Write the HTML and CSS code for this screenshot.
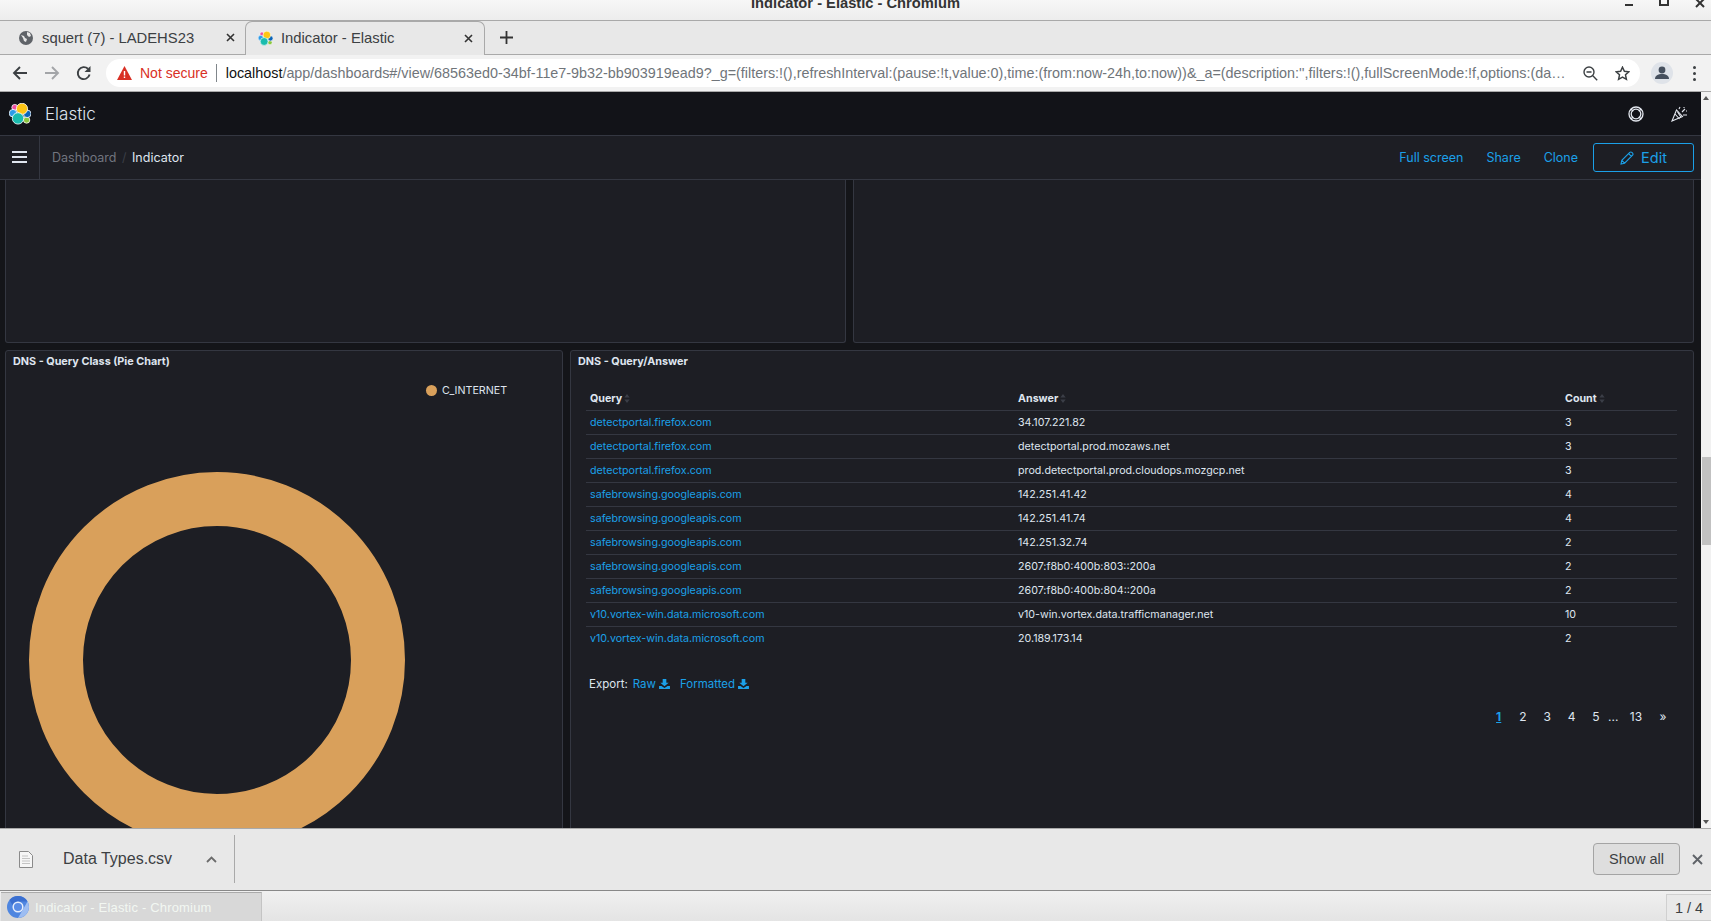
FILE: index.html
```html
<!DOCTYPE html>
<html lang="en">
<head>
  <meta charset="UTF-8">
  <title>Indicator - Elastic - Chromium</title>
  <link rel="stylesheet" href="styles.css">
</head>
<body>
  <svg class="defs" width="0" height="0">
    <symbol id="elastic-logo" viewBox="0 0 22 22">
      <circle cx="5.8" cy="4.4" r="3" fill="#ee4fa0" stroke="#fff" stroke-width=".8"/>
      <circle cx="17.6" cy="17" r="3.2" fill="#8cc63f" stroke="#fff" stroke-width=".8"/>
      <circle cx="4" cy="10.2" r="3.8" fill="#2d9be8" stroke="#fff" stroke-width=".8"/>
      <circle cx="18.2" cy="10.8" r="3.8" fill="#0b64b8" stroke="#fff" stroke-width=".8"/>
      <circle cx="13" cy="5.8" r="5.6" fill="#fec514" stroke="#fff" stroke-width=".8"/>
      <circle cx="9" cy="15.4" r="5.7" fill="#1abcae" stroke="#fff" stroke-width=".8"/>
    </symbol>
    <symbol id="download" viewBox="0 0 12 11">
      <path d="M4 0h4v4h2.6L6 8 1.4 4H4z" fill="currentColor"/>
      <path d="M0 7.6h2.6L6 10l3.4-2.4H12V11H0z" fill="currentColor"/>
    </symbol>
    <symbol id="sort" viewBox="0 0 6 10">
      <path d="M3 0l3 4H0zM3 10L0 6h6z" fill="#3a3d46"/>
    </symbol>
  </svg>

  <div class="titlebar">
    <span class="title-text">Indicator - Elastic - Chromium</span>
    <div class="win-buttons">
      <span class="win-min"></span>
      <span class="win-max"></span>
      <svg class="win-close" width="10" height="10" viewBox="0 0 10 10"><path d="M1 1l8 8M9 1l-8 8" stroke="#333" stroke-width="2"/></svg>
    </div>
  </div>

  <div class="tabstrip">
    <div class="tab">
      <svg class="tab-icon" width="14" height="14" viewBox="0 0 14 14"><circle cx="7" cy="7" r="7" fill="#5f6368"/><path d="M2 4l3 1 1 2 2 1-1 3-2-1-1-3zM8 1l3 1 1 3-2 1-2-2z" fill="#e8e8e8"/></svg>
      <span class="tab-name">squert (7) - LADEHS23</span>
      <svg class="tab-x" width="9" height="9" viewBox="0 0 9 9"><path d="M1 1l7 7M8 1L1 8" stroke="#333" stroke-width="1.6"/></svg>
    </div>
    <div class="tab tab-active">
      <svg class="tab-icon" width="15" height="15"><use href="#elastic-logo"/></svg>
      <span class="tab-name">Indicator - Elastic</span>
      <svg class="tab-x" width="9" height="9" viewBox="0 0 9 9"><path d="M1 1l7 7M8 1L1 8" stroke="#333" stroke-width="1.6"/></svg>
    </div>
    <svg class="new-tab" width="13" height="13" viewBox="0 0 13 13"><path d="M6.5 0v13M0 6.5h13" stroke="#333" stroke-width="1.8"/></svg>
  </div>

  <div class="toolbar">
    <svg class="nav-btn" width="16" height="16" viewBox="0 0 16 16"><path d="M15 8H2M8 2L2 8l6 6" fill="none" stroke="#3c4043" stroke-width="1.9"/></svg>
    <svg class="nav-btn" width="16" height="16" viewBox="0 0 16 16"><path d="M1 8h13M8 2l6 6-6 6" fill="none" stroke="#a3a5a8" stroke-width="1.9"/></svg>
    <svg class="nav-btn" width="16" height="16" viewBox="0 0 16 16"><path d="M13.6 9.6A6 6 0 1 1 12 3.8" fill="none" stroke="#3c4043" stroke-width="1.9"/><path d="M14.5 1v6h-6z" fill="#3c4043"/></svg>
    <div class="omnibox">
      <svg class="warn" width="15" height="14" viewBox="0 0 15 14"><path d="M7.5 0L15 14H0z" fill="#d93025"/><path d="M6.8 5h1.4v4.6H6.8zM6.8 10.6h1.4V12H6.8z" fill="#fff"/></svg>
      <span class="not-secure">Not secure</span>
      <span class="url"><span class="url-host">localhost</span>/app/dashboards#/view/68563ed0-34bf-11e7-9b32-bb903919ead9?_g=(filters:!(),refreshInterval:(pause:!t,value:0),time:(from:now-24h,to:now))&amp;_a=(description:'',filters:!(),fullScreenMode:!f,options:(da…</span>
      <svg class="omni-icon" width="15" height="15" viewBox="0 0 15 15"><circle cx="6" cy="6" r="5" fill="none" stroke="#3c4043" stroke-width="1.4"/><path d="M3.5 6h5M9.8 9.8l4.4 4.4" stroke="#3c4043" stroke-width="1.4"/></svg>
      <svg class="omni-icon star" width="15" height="15" viewBox="0 0 15 15"><path d="M7.5 1.2l1.9 4.1 4.4.5-3.3 3 .9 4.5-3.9-2.3-3.9 2.3.9-4.5-3.3-3 4.4-.5z" fill="none" stroke="#3c4043" stroke-width="1.5"/></svg>
    </div>
    <span class="avatar"><svg width="14" height="14" viewBox="0 0 14 14"><circle cx="7" cy="4" r="3.4" fill="#46505e"/><path d="M0 13c0-3.5 3-5 7-5s7 1.500 7 5z" fill="#46505e"/></svg></span>
    <span class="menu-dots"><i></i><i></i><i></i></span>
  </div>

  <div class="main">
    <div class="app">
      <header class="app-header">
        <svg class="app-logo" width="22" height="22"><use href="#elastic-logo"/></svg>
        <span class="app-name">Elastic</span>
        <svg class="head-icon" width="16" height="16" viewBox="0 0 16 16"><g fill="none" stroke="#e4e8ef" stroke-width="1.300"><circle cx="8" cy="8" r="7"/><circle cx="8" cy="8" r="4.800"/><path d="M3 3l2.200 2.200M13 3l-2.200 2.200M3 13l2.200-2.200M13 13l-2.200-2.200"/></g></svg>
        <svg class="head-icon party" width="17" height="16" viewBox="0 0 17 16"><g fill="none" stroke="#e4e8ef" stroke-width="1.100"><path d="M1 15L5.500 4l6 6.500z"/><path d="M4 8l4.500 5M6.500 5.800l3.500 5.400"/><path d="M8 3l1-2M11 6l3-3M12 9h4M13 1v1M15 5h1"/></g></svg>
      </header>
      <nav class="app-nav">
        <span class="burger"><i></i><i></i><i></i></span>
        <div class="crumbs">
          <span class="crumb">Dashboard</span>
          <span class="crumb-sep">/</span>
          <span class="crumb-current">Indicator</span>
        </div>
        <div class="nav-actions">
          <a class="nav-link">Full screen</a>
          <a class="nav-link">Share</a>
          <a class="nav-link">Clone</a>
          <a class="edit-btn"><svg width="14" height="14" viewBox="0 0 14 14"><path d="M1 13l.8-3.600L9.800 1.400a1.400 1.400 0 0 1 2 0l.8.8a1.400 1.400 0 0 1 0 2l-8 8zM8.600 2.600l2.800 2.800M1.800 9.400l2.800 2.800" fill="none" stroke="#1ba0e8" stroke-width="1.100"/></svg>Edit</a>
        </div>
      </nav>

      <div class="dashboard">
        <div class="row row-top">
          <div class="panel panel-half"></div>
          <div class="panel panel-half"></div>
        </div>
        <div class="row row-main">
          <section class="panel panel-pie">
            <h3 class="panel-title">DNS - Query Class (Pie Chart)</h3>
            <div class="legend"><span class="legend-dot"></span>C_INTERNET</div>
            <svg class="donut" width="376" height="376" viewBox="0 0 376 376"><circle cx="188" cy="188" r="161" fill="none" stroke="#d9a05b" stroke-width="54"/></svg>
          </section>
          <section class="panel panel-table">
            <h3 class="panel-title">DNS - Query/Answer</h3>
            <table class="data-table">
              <thead>
                <tr>
                  <th class="col-query">Query<svg class="sort" width="6" height="9"><use href="#sort"/></svg></th>
                  <th class="col-answer">Answer<svg class="sort" width="6" height="9"><use href="#sort"/></svg></th>
                  <th>Count<svg class="sort" width="6" height="9"><use href="#sort"/></svg></th>
                </tr>
              </thead>
              <tbody>
                <tr><td><a>detectportal.firefox.com</a></td><td>34.107.221.82</td><td>3</td></tr>
                <tr><td><a>detectportal.firefox.com</a></td><td>detectportal.prod.mozaws.net</td><td>3</td></tr>
                <tr><td><a>detectportal.firefox.com</a></td><td>prod.detectportal.prod.cloudops.mozgcp.net</td><td>3</td></tr>
                <tr><td><a>safebrowsing.googleapis.com</a></td><td>142.251.41.42</td><td>4</td></tr>
                <tr><td><a>safebrowsing.googleapis.com</a></td><td>142.251.41.74</td><td>4</td></tr>
                <tr><td><a>safebrowsing.googleapis.com</a></td><td>142.251.32.74</td><td>2</td></tr>
                <tr><td><a>safebrowsing.googleapis.com</a></td><td>2607:f8b0:400b:803::200a</td><td>2</td></tr>
                <tr><td><a>safebrowsing.googleapis.com</a></td><td>2607:f8b0:400b:804::200a</td><td>2</td></tr>
                <tr><td><a>v10.vortex-win.data.microsoft.com</a></td><td>v10-win.vortex.data.trafficmanager.net</td><td>10</td></tr>
                <tr><td><a>v10.vortex-win.data.microsoft.com</a></td><td>20.189.173.14</td><td>2</td></tr>
              </tbody>
            </table>
            <div class="export">
              <span class="export-label">Export:</span>
              <a class="export-link">Raw<svg width="11" height="10"><use href="#download"/></svg></a>
              <a class="export-link">Formatted<svg width="11" height="10"><use href="#download"/></svg></a>
            </div>
            <div class="pager">
              <a class="page page-current">1</a>
              <a class="page">2</a>
              <a class="page">3</a>
              <a class="page">4</a>
              <a class="page">5</a>
              <span class="page-gap">...</span>
              <a class="page page-last">13</a>
              <a class="page page-next">»</a>
            </div>
          </section>
        </div>
      </div>
    </div>
    <div class="scrollbar">
      <span class="arrow-up"></span>
      <div class="scroll-track"><span class="scroll-thumb"></span></div>
      <span class="arrow-down"></span>
    </div>
  </div>

  <div class="downloads">
    <svg class="file-icon" width="14" height="17" viewBox="0 0 14 17"><path d="M.5.5h9l4 4v12H.500z" fill="#f6f6f6" stroke="#8a8a8a"/><path d="M3 5h6M3 7.500h8M3 10h8M3 12.500h8" stroke="#c4c4c4"/></svg>
    <span class="file-name">Data Types.csv</span>
    <svg class="chevron" width="11" height="7" viewBox="0 0 11 7"><path d="M1 6l4.500-4.500L10 6" fill="none" stroke="#6b6b6b" stroke-width="1.800"/></svg>
    <span class="dl-sep"></span>
    <button class="show-all">Show all</button>
    <svg class="dl-close" width="11" height="11" viewBox="0 0 11 11"><path d="M1 1l9 9M10 1l-9 9" stroke="#5f6368" stroke-width="1.900"/></svg>
  </div>

  <div class="taskbar">
    <div class="task">
      <svg width="22" height="22" viewBox="0 0 22 22"><circle cx="11" cy="11" r="11" fill="#4f86e0"/><path d="M11 0a11 11 0 0 1 9.500 5.500H11A5.500 5.500 0 0 0 5.700 9.500L2.500 4A11 11 0 0 1 11 0z" fill="#3a6fd0"/><path d="M11 22l4.800-8.200 4.700-8.300A11 11 0 0 1 11 22z" fill="#9dbdf2"/><circle cx="11" cy="11" r="4.800" fill="#5a8de6" stroke="#e6eefc" stroke-width="1.500"/></svg>
      <span class="task-name">Indicator - Elastic - Chromium</span>
    </div>
    <div class="pager-box">1 / 4</div>
  </div>
</body>
</html>
```

FILE: styles.css
```css
html, body {
  margin: 0;
  height: 100%;
  overflow: hidden;
}
body {
  display: flex;
  flex-direction: column;
  height: 921px;
  font-family: "Liberation Sans", Arial, sans-serif;
  background: #e8e8e8;
}
.defs {
  display: block;
  height: 0;
}

/* window chrome */
.titlebar {
  height: 20px;
  flex: none;
  display: flex;
  justify-content: center;
  background: linear-gradient(#f7f7f7, #ededed);
  border-bottom: 1px solid #a9a9a9;
  overflow: hidden;
}
.title-text {
  font-size: 14.700px;
  font-weight: bold;
  line-height: 6px;
  color: #333;
}
.win-buttons {
  margin-left: auto;
  position: absolute;
  right: 0;
  top: 0;
  display: flex;
  align-items: flex-start;
}
.win-min {
  width: 8px;
  height: 2px;
  margin-top: 4px;
  background: #333;
}
.win-max {
  width: 6px;
  height: 4px;
  margin: 0 26px;
  border: 2px solid #333;
  border-top: 0;
}
.win-close {
  margin: -2px 6px 0 0;
}

.tabstrip {
  height: 33px;
  flex: none;
  display: flex;
  align-items: stretch;
  background: #e8e8e8;
  border-bottom: 1px solid #a9a9a9;
}
.tab {
  width: 245px;
  box-sizing: border-box;
  display: flex;
  align-items: center;
  padding: 0 10px 0 19px;
  font-size: 14.800px;
  color: #3c4043;
}
.tab-active {
  width: 240px;
  padding: 0 11px 1px 12px;
  margin-bottom: -1px;
  background: #e8e8e8;
  border: 1px solid #a9a9a9;
  border-bottom: 0;
  border-radius: 7px 7px 0 0;
}
.tab-icon {
  flex: none;
  margin-right: 9px;
}
.tab-active .tab-icon {
  margin-right: 8px;
}
.tab-name {
  flex: 1;
  white-space: nowrap;
}
.new-tab {
  align-self: center;
  margin-left: 15px;
}

.toolbar {
  height: 37px;
  flex: none;
  display: flex;
  align-items: center;
  background: #f2f2f2;
  border-bottom: 1px solid #a9a9a9;
  box-sizing: border-box;
  padding-left: 12px;
}
.nav-btn {
  flex: none;
  margin-right: 16px;
}
.omnibox {
  width: 1534px;
  height: 28px;
  margin-left: -2px;
  box-sizing: border-box;
  flex: none;
  display: flex;
  align-items: center;
  padding-left: 11px;
  background: #fff;
  border-radius: 14px;
  font-size: 14px;
  white-space: nowrap;
}
.warn {
  flex: none;
  margin-right: 8px;
}
.not-secure {
  color: #d93025;
  padding-right: 8px;
  margin-right: 9px;
  border-right: 1px solid #80868b;
  line-height: 18px;
}
.url {
  width: 1341px;
  flex: none;
  overflow: hidden;
  color: #70757a;
  font-size: 14.360px;
}
.url-host {
  color: #111;
}
.omni-icon {
  flex: none;
  margin-left: 16px;
}
.star {
  margin-left: 17px;
}
.avatar {
  width: 22px;
  height: 22px;
  flex: none;
  margin-left: 11px;
  border-radius: 50%;
  background: #dfe3e9;
  display: flex;
  align-items: center;
  justify-content: center;
}
.menu-dots {
  flex: none;
  margin-left: 20px;
  display: flex;
  flex-direction: column;
  gap: 3px;
}
.menu-dots i {
  width: 3px;
  height: 3px;
  border-radius: 50%;
  background: #3c4043;
}

/* kibana */
.main {
  height: 736px;
  flex: none;
  display: flex;
  overflow: hidden;
}
.app {
  width: 1701px;
  flex: none;
  display: flex;
  flex-direction: column;
  background: #141519;
  font-family: Inter, "Liberation Sans", sans-serif;
}
.app-header {
  height: 44px;
  flex: none;
  box-sizing: border-box;
  display: flex;
  align-items: center;
  padding-left: 9px;
  background: #121318;
  border-bottom: 1px solid #343741;
}
.app-logo {
  flex: none;
  margin-right: 14px;
}
.app-name {
  font-size: 17px;
  font-weight: 300;
  color: #dfe5ef;
}
.head-icon {
  flex: none;
  margin-left: auto;
  margin-right: 27px;
}
.head-icon.party {
  margin-left: 0;
  margin-right: 13px;
}
.app-nav {
  height: 44px;
  flex: none;
  box-sizing: border-box;
  display: flex;
  align-items: center;
  background: #1d1e24;
  border-bottom: 1px solid #343741;
  font-size: 12.500px;
}
.burger {
  width: 40px;
  height: 100%;
  box-sizing: border-box;
  display: flex;
  flex-direction: column;
  align-items: center;
  justify-content: center;
  gap: 3px;
  border-right: 1px solid #343741;
  padding-bottom: 2px;
}
.burger i {
  width: 15px;
  height: 2px;
  background: #dfe5ef;
}
.crumbs {
  margin: 0 0 1px 12px;
  display: flex;
  align-items: center;
}
.crumb {
  color: #71757f;
}
.crumb-sep {
  margin: 0 5.500px;
  color: #3b3e47;
}
.crumb-current {
  color: #dfe5ef;
}
.nav-actions {
  margin-left: auto;
  margin-right: 7px;
  display: flex;
  align-items: center;
}
.nav-link {
  color: #1ba0e8;
  margin: 0 23px 1px 0;
}
.nav-link:nth-child(3) {
  margin-right: 15px;
}
.edit-btn {
  width: 101px;
  height: 29px;
  box-sizing: border-box;
  display: flex;
  align-items: center;
  justify-content: center;
  gap: 7px;
  border: 1px solid #1ba0e8;
  border-radius: 3px;
  color: #1ba0e8;
  font-size: 14.500px;
}

.dashboard {
  flex: 1;
  min-height: 0;
  box-sizing: border-box;
  padding: 0 7px 0 5px;
  display: flex;
  flex-direction: column;
  gap: 7px;
  overflow: hidden;
}
.row {
  display: flex;
  gap: 7px;
  flex: none;
}
.row-top {
  height: 163px;
}
.row-main {
  height: 660px;
}
.panel {
  box-sizing: border-box;
  background: #1d1e24;
  border: 1px solid #343741;
  border-radius: 3px;
  overflow: hidden;
}
.panel-half {
  flex: 1;
  border-top: 0;
  border-radius: 0 0 3px 3px;
}
.panel-pie {
  width: 558px;
  flex: none;
}
.panel-table {
  flex: 1;
}
.panel-title {
  margin: 0;
  padding: 4px 7px 0;
  font-size: 10.800px;
  line-height: 14px;
  font-weight: 700;
  color: #dfe5ef;
}
.legend {
  margin: 14px 0 0 420px;
  display: flex;
  align-items: center;
  gap: 5px;
  height: 14px;
  font-size: 10.700px;
  color: #dfe5ef;
}
.legend-dot {
  width: 11px;
  height: 11px;
  border-radius: 50%;
  background: #d9a05b;
}
.donut {
  display: block;
  margin: 75px 0 0 23px;
}

.data-table {
  width: 1091px;
  margin: 18px 0 0 15px;
  table-layout: fixed;
  border-collapse: collapse;
  font-size: 10.700px;
  color: #dfe5ef;
}
.col-query {
  width: 428px;
}
.col-answer {
  width: 547px;
}
.data-table th {
  height: 23px;
  box-sizing: border-box;
  padding: 0 4px;
  text-align: left;
  font-weight: 700;
  border-bottom: 1px solid #343741;
}
.data-table td {
  height: 24px;
  padding: 0 4px;
  box-sizing: border-box;
  border-top: 1px solid #343741;
}
.data-table tbody tr:first-child td {
  border-top: 0;
}
.data-table a {
  color: #1ba0e8;
}
.sort {
  margin-left: 2px;
  vertical-align: -1px;
}
.export {
  margin: 26px 0 0 18px;
  display: flex;
  align-items: center;
  height: 16px;
  font-size: 11.500px;
  color: #dfe5ef;
}
.export-label {
  margin-right: 5px;
}
.export-link {
  display: flex;
  align-items: center;
  gap: 3px;
  margin-right: 10px;
  color: #1ba0e8;
}
.pager {
  margin-top: 17px;
  display: flex;
  justify-content: flex-end;
  padding-right: 21px;
  font-size: 12px;
  line-height: 16px;
  color: #dfe5ef;
}
.page {
  width: 24.300px;
  text-align: center;
}
.page-current {
  color: #1ba0e8;
  font-weight: 700;
  text-decoration: underline;
}
.page-gap {
  width: 10px;
  text-align: center;
}
.page-last {
  width: 36px;
}
.page-next {
  width: 18px;
}

.scrollbar {
  width: 10px;
  flex: none;
  display: flex;
  flex-direction: column;
  background: #f1f1f1;
}
.arrow-up, .arrow-down {
  height: 12px;
  flex: none;
  position: relative;
}
.arrow-up::after, .arrow-down::after {
  content: "";
  position: absolute;
  left: 2px;
  top: 4px;
  border-left: 3px solid transparent;
  border-right: 3px solid transparent;
}
.arrow-up::after {
  border-bottom: 4px solid #555;
}
.arrow-down::after {
  border-top: 4px solid #555;
}
.scroll-track {
  flex: 1;
  padding-top: 353px;
  box-sizing: border-box;
}
.scroll-thumb {
  display: block;
  height: 88px;
  margin-left: 1px;
  background: #c1c1c1;
}

.downloads {
  height: 63px;
  flex: none;
  box-sizing: border-box;
  display: flex;
  align-items: center;
  padding: 0 8px 1px 19px;
  background: #e8e8e8;
  border-top: 1px solid #a9a9a9;
  border-bottom: 1px solid #888;
}
.file-name {
  margin-left: 30px;
  font-size: 16px;
  color: #3c4043;
}
.chevron {
  margin-left: 34px;
}
.dl-sep {
  width: 1px;
  height: 48px;
  margin-left: 17px;
  background: #a9a9a9;
}
.show-all {
  width: 87px;
  height: 32px;
  margin-left: auto;
  padding: 0;
  background: #dedede;
  border: 1px solid #a4a4a4;
  border-radius: 4px;
  font-family: inherit;
  font-size: 14.500px;
  color: #3c4043;
}
.dl-close {
  margin-left: 12px;
}

.taskbar {
  height: 30px;
  flex: none;
  display: flex;
  justify-content: space-between;
  align-items: flex-end;
  background: linear-gradient(#f0f0f0, #e4e4e4);
}
.task {
  width: 261px;
  height: 29px;
  margin-left: 1px;
  box-sizing: border-box;
  display: flex;
  align-items: center;
  gap: 6px;
  padding-left: 6px;
  background: #d8d8d8;
  border-top: 1px solid #aaa;
  border-right: 1px solid #c4c4c4;
}
.task-name {
  padding-top: 1px;
  font-size: 13px;
  letter-spacing: .18px;
  color: #f2f7f2;
  white-space: nowrap;
}
.pager-box {
  width: 45px;
  height: 27px;
  box-sizing: border-box;
  display: flex;
  align-items: center;
  justify-content: center;
  background: #e9e9e9;
  border: 1px solid #d0d0d0;
  border-right: 0;
  font-size: 14.500px;
  color: #3c4043;
}
```
